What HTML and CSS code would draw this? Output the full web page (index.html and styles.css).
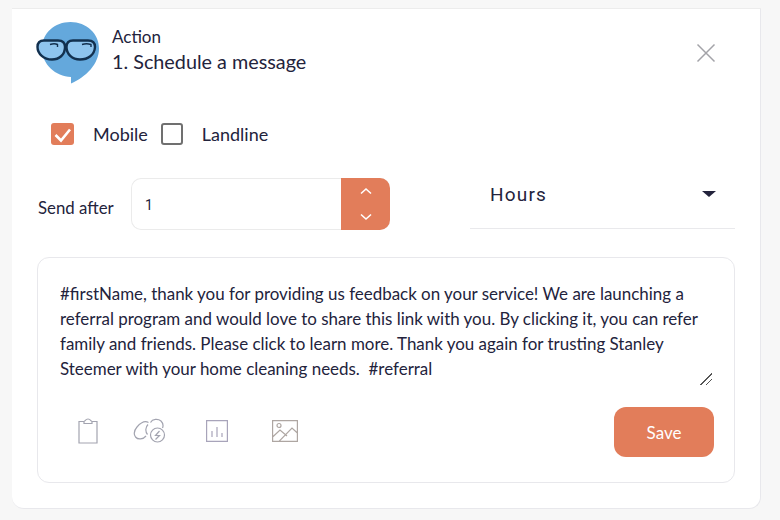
FILE: index.html
```html
<!DOCTYPE HTML>
<html>

<head>
    <title>Schedule a message</title>
    <meta name="viewport" content="width=device-width, initial-scale=1">
    <link rel="stylesheet" href="styles.css">
</head>

<body>
    <div class="card">
        <!-- Header -->
        <div class="header">
            <svg class="avatar" width="66" height="64" viewBox="0 0 66 64">
                <path d="M35 54.9C19.5 54.5 6 42.5 6 26.5C6 11 18.8 0 34.5 0C50.5 0 63 11.5 63 26.5C63 42 50 55 35 61.5Z" fill="#64a8dc"/>
                <path d="M8 18.5H22C27 18.5 29 21 29 25C29 33 23 37.5 16 37.5C8 37.5 1.5 32 1.5 25C1.5 21 4 18.5 8 18.5Z" fill="#8ec4ee" stroke="#12304f" stroke-width="2.4"/>
                <path d="M37 18.5H52C57 18.5 59 21 59 25C58.5 33 52 37.5 44 37.5C36 37.5 30.5 32 30.5 25C30.5 21 32.5 18.5 37 18.5Z" fill="#8ec4ee" stroke="#12304f" stroke-width="2.4"/>
                <path d="M14 22.5C17 21.5 19.5 21.5 21.5 22.5V25M46 22.5C49 21.5 52 21.5 55 22.5V25" fill="none" stroke="#12304f" stroke-width="1.4"/>
            </svg>
            <div class="titles">
                <div class="label">Action</div>
                <div class="title">1. Schedule a message</div>
            </div>
            <svg class="close" width="20" height="20" viewBox="0 0 20 20">
                <path d="M1.5 1.5L18.5 18.5M18.5 1.5L1.5 18.5" stroke="#a3a3a8" stroke-width="1.5"/>
            </svg>
        </div>

        <!-- Phone type -->
        <div class="types">
            <span class="check checked">
                <svg width="23" height="22" viewBox="0 0 23 22">
                    <path d="M4.5 12L10 17.5L19 6.5" fill="none" stroke="#fff" stroke-width="2.6"/>
                </svg>
            </span>
            <span class="type-name first">Mobile</span>
            <span class="check"></span>
            <span class="type-name">Landline</span>
        </div>

        <!-- Delay -->
        <div class="delay">
            <span class="send-label">Send after</span>
            <div class="number">
                <span class="number-value">1</span>
                <div class="stepper">
                    <svg width="12" height="8" viewBox="0 0 12 8"><path d="M1 6.5L6 2L11 6.5" fill="none" stroke="#fff" stroke-width="1.6"/></svg>
                    <svg width="12" height="8" viewBox="0 0 12 8"><path d="M1 1.5L6 6L11 1.5" fill="none" stroke="#fff" stroke-width="1.6"/></svg>
                </div>
            </div>
            <div class="select">
                <span>Hours</span>
                <span class="caret"></span>
            </div>
        </div>

        <!-- Message -->
        <div class="message">
            <textarea class="message-text" spellcheck="false">#firstName, thank you for providing us feedback on your service! We are launching a referral program and would love to share this link with you. By clicking it, you can refer family and friends. Please click to learn more. Thank you again for trusting Stanley Steemer with your home cleaning needs.  #referral</textarea>
            <div class="message-footer">
                <div class="tools">
                    <svg class="tool tool-clip" width="22" height="26" viewBox="0 0 22 26">
                        <path d="M7 3.5H2V25H20V3.5H15M7 5.5V3.5C8 3.5 8.5 1 11 1C13.5 1 14 3.5 15 3.5V5.5Z" fill="none" stroke="#a3a4b0" stroke-width="1.2"/>
                    </svg>
                    <svg class="tool tool-link" width="34" height="26" viewBox="0 0 34 26">
                        <path d="M15.5 4.5C12 2.5 7.5 5 4 9C1 12.5 .5 16 2.5 19C5 22 10 21.5 13 18M15 6.5C12.5 9 12 13.5 14.5 16.5M17.5 4.5C19.5 .8 25 .5 28 3C30 5 30.5 7.5 29.5 10" fill="none" stroke="#a3a4b0" stroke-width="1.2"/>
                        <circle cx="24.5" cy="17" r="7" fill="#fff" stroke="#a3a4b0" stroke-width="1.2"/>
                        <path d="M26.5 13L22.5 17.5H26.5L22.5 21.5" fill="none" stroke="#a3a4b0" stroke-width="1.2"/>
                    </svg>
                    <svg class="tool tool-chart" width="22" height="22" viewBox="0 0 22 22">
                        <path d="M.6.6H21.4V21.4H.6ZM6 11V17M11 7V17M16 13V17" fill="none" stroke="#a8a4ba" stroke-width="1.2"/>
                    </svg>
                    <svg class="tool" width="26" height="22" viewBox="0 0 26 22">
                        <path d="M.6.6H25.4V21.4H.6ZM.6 17L8 10L15 16M7 21.4L20 8L25.4 13" fill="none" stroke="#aea6a2" stroke-width="1.2"/>
                        <circle cx="7" cy="5.5" r="2" fill="none" stroke="#aea6a2" stroke-width="1.2"/>
                    </svg>
                </div>
                <button class="save">Save</button>
            </div>
        </div>
    </div>
</body>

</html>
```

FILE: styles.css
```css
html {
    font-family: "Lato", sans-serif;
    color: #23233c;
}

body {
    margin: 0;
    height: 520px;
    padding: 9px 19px 0 12px;
    box-sizing: border-box;
    background-color: #f7f7f7;
    overflow: hidden;
}

.card {
    height: 500px;
    box-sizing: border-box;
    padding: 13px 25px 0 24px;
    background-color: #fff;
    border-right: 1px solid #e8e8ec;
    border-bottom: 1px solid #e8e8ec;
    border-radius: 0 0 12px 12px;
    box-shadow: 0 -1px 0 #ececec;
}

.header {
    display: flex;
    align-items: flex-start;
    height: 64px;
}

.avatar {
    flex: none;
}

.titles {
    margin-left: 10px;
    margin-top: 3px;
}

.label {
    font-size: 17px;
    line-height: 24px;
}

.title {
    font-size: 19.8px;
    line-height: 25px;
}

.close {
    flex: none;
    margin-left: auto;
    margin-top: 21px;
    margin-right: 19px;
}

.types {
    display: flex;
    align-items: center;
    height: 24px;
    margin-top: 36px;
    padding-left: 15px;
}

.check {
    flex: none;
    width: 22px;
    height: 22px;
    box-sizing: border-box;
    border: 2px solid #707070;
    border-radius: 3px;
}

.check.checked {
    width: 23px;
    border: none;
    background-color: #e27d5a;
}

.check svg {
    display: block;
}

.type-name {
    margin-left: 19px;
    font-size: 18px;
}

.type-name.first {
    margin-right: 13px;
}

.delay {
    display: flex;
    align-items: flex-start;
    margin-top: 32px;
    height: 52px;
    padding-left: 2px;
}

.send-label {
    width: 93px;
    margin-top: 18px;
    font-size: 16.8px;
    line-height: 24px;
}

.number {
    display: flex;
    width: 259px;
    height: 52px;
    box-sizing: border-box;
    border: 1px solid #ebebeb;
    border-right: none;
    border-radius: 10px;
}

.number-value {
    flex: 1;
    padding: 16px 0 0 13px;
    font-family: "Roboto", sans-serif;
    font-size: 14px;
    line-height: 20px;
}

.stepper {
    display: flex;
    flex-direction: column;
    align-items: center;
    justify-content: space-between;
    width: 49px;
    height: 52px;
    margin-top: -1px;
    padding: 9px 0;
    box-sizing: border-box;
    background-color: #e27d5a;
    border-radius: 0 10px 10px 0;
}

.select {
    display: flex;
    align-items: flex-start;
    justify-content: space-between;
    width: 265px;
    height: 51px;
    margin-left: 80px;
    padding: 5px 19px 0 20px;
    box-sizing: border-box;
    border-bottom: 1px solid #e9e9ec;
    font-family: "Roboto", sans-serif;
    font-size: 19px;
    line-height: 24px;
    letter-spacing: 1.2px;
}

.caret {
    width: 0;
    height: 0;
    margin-top: 8px;
    border-left: 7px solid transparent;
    border-right: 7px solid transparent;
    border-top: 6px solid #23233c;
}

.message {
    width: 698px;
    height: 226px;
    box-sizing: border-box;
    margin-top: 27px;
    margin-left: 1px;
    padding: 23px 22px 0 10px;
    border: 1px solid #e8e8ec;
    border-radius: 12px;
}

.message-text {
    display: block;
    width: 100%;
    height: 104px;
    box-sizing: border-box;
    padding: 0 12px;
    border: none;
    outline: none;
    resize: vertical;
    color: #23233c;
    font-family: "Lato", sans-serif;
    font-size: 16.95px;
    line-height: 25px;
}

.message-text::-webkit-resizer {
    background: linear-gradient(135deg, transparent 60%, #555 60% 66%, transparent 66% 77%, #555 77% 83%, transparent 83%);
}

.message-footer {
    display: flex;
    align-items: flex-start;
    justify-content: space-between;
    margin-right: -2px;
    margin-top: 22px;
}

.tools {
    display: flex;
    align-items: center;
    padding: 11px 0 0 29px;
}

.tool {
    display: block;
}

.tool-clip {
    margin-right: 34px;
}

.tool-link {
    margin-right: 39px;
}

.tool-chart {
    margin-right: 44px;
}

.save {
    width: 100px;
    height: 50px;
    border: none;
    border-radius: 12px;
    color: #fff;
    background-color: #e27d5a;
    font-family: "Lato", sans-serif;
    font-size: 17px;
}
```
